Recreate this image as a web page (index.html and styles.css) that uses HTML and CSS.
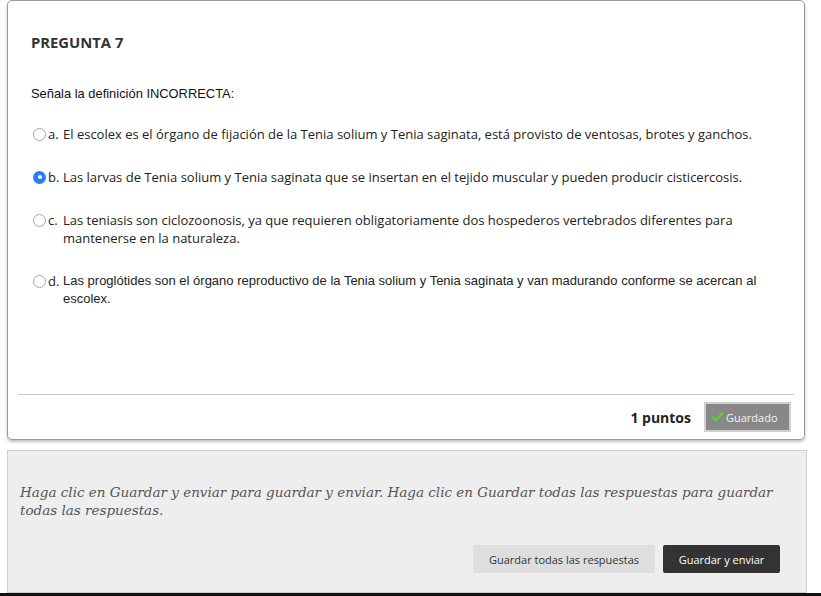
FILE: index.html
```html
<!DOCTYPE html>
<html lang="es">
<head>
<meta charset="utf-8">
<title>Pregunta 7</title>
<link rel="stylesheet" href="styles.css">
</head>
<body>
<div class="page">
  <section class="card">
    <h2 class="q-title">PREGUNTA 7</h2>
    <p class="q-text">Señala la definición INCORRECTA:</p>
    <ul class="options">
      <li class="opt">
        <span class="radio"></span>
        <span class="letter">a.</span>
        <span class="opt-text">El escolex es el órgano de fijación de la Tenia solium y Tenia saginata, está provisto de ventosas, brotes y ganchos.</span>
      </li>
      <li class="opt">
        <span class="radio checked"></span>
        <span class="letter">b.</span>
        <span class="opt-text">Las larvas de Tenia solium y Tenia saginata que se insertan en el tejido muscular y pueden producir cisticercosis.</span>
      </li>
      <li class="opt">
        <span class="radio"></span>
        <span class="letter">c.</span>
        <span class="opt-text">Las teniasis son ciclozoonosis, ya que requieren obligatoriamente dos hospederos vertebrados diferentes para mantenerse en la naturaleza.</span>
      </li>
      <li class="opt">
        <span class="radio"></span>
        <span class="letter">d.</span>
        <span class="opt-text arial">Las proglótides son el órgano reproductivo de la Tenia solium y Tenia saginata y van madurando conforme se acercan al escolex.</span>
      </li>
    </ul>
    <div class="card-foot">
      <span class="points">1 puntos</span>
      <span class="saved">
        <svg class="check" width="11" height="10" viewBox="0 0 11 10"><path d="M1 5.5 L4 8.5 L10 1.5" fill="none" stroke="#5fd12f" stroke-width="2.2" stroke-linecap="round" stroke-linejoin="round"/></svg>
        Guardado
      </span>
    </div>
  </section>
  <section class="submit-panel">
    <p class="hint">Haga clic en Guardar y enviar para guardar y enviar. Haga clic en Guardar todas las respuestas para guardar todas las respuestas.</p>
    <div class="actions">
      <button class="btn btn-light">Guardar todas las respuestas</button>
      <button class="btn btn-dark">Guardar y enviar</button>
    </div>
  </section>
</div>
<div class="bottom-bar"></div>
</body>
</html>
```

FILE: styles.css
```css
* { box-sizing: border-box; }
html, body { margin: 0; padding: 0; background: #fff; }
body { font-family: "Open Sans", sans-serif; color: #262626; }

.page { padding: 0 14px 0 7px; }

.card {
  width: 798px;
  height: 440px;
  border: 1px solid #9a9a9a;
  border-radius: 5px;
  box-shadow: 0 2px 3px rgba(0,0,0,0.25);
  padding: 28px 10px 0 10px;
  display: flex;
  flex-direction: column;
}

.q-title {
  margin: 0 0 0 13px;
  font-size: 14.8px;
  font-weight: 700;
  color: #333;
  line-height: 26px;
}

.q-text {
  margin: 30px 0 0 13px;
  font-family: "Liberation Sans", Arial, sans-serif;
  font-size: 12.9px;
  line-height: 18px;
  color: #111;
}

.options {
  list-style: none;
  margin: 22px 0 0 0;
  padding: 0 0 0 14px;
  display: flex;
  flex-direction: column;
  gap: 25px;
}

.opt {
  display: flex;
  align-items: flex-start;
  font-size: 13px;
  line-height: 18px;
  color: #222;
}

.radio {
  flex: none;
  width: 13px;
  height: 13px;
  border-radius: 50%;
  border: 1px solid #a6a6a6;
  background: #fff;
  margin: 2.5px 2px 0 1px;
  position: relative;
}
.radio.checked {
  border: none;
  background: #2a7df6;
}
.radio.checked::after {
  content: "";
  position: absolute;
  left: 4.5px;
  top: 4.5px;
  width: 4px;
  height: 4px;
  border-radius: 50%;
  background: #fff;
}

.letter {
  flex: none;
  width: 15px;
}

.opt-text { flex: 1; padding-right: 30px; }
.opt-text.arial { font-family: "Liberation Sans", Arial, sans-serif; font-size: 13px; }

.card-foot {
  margin-top: auto;
  border-top: 1px solid #ccc;
  height: 45px;
  display: flex;
  align-items: center;
  justify-content: flex-end;
  gap: 13px;
  padding-right: 3px;
}

.points {
  font-size: 14px;
  font-weight: 700;
  color: #222;
}

.saved {
  display: inline-flex;
  align-items: center;
  gap: 3px;
  width: 87px;
  height: 30px;
  padding-left: 6px;
  background: #888;
  border: 2px solid #d0d0d0;
  color: #f2f2f2;
  font-size: 11px;
}
.check { display: block; }

.submit-panel {
  margin-top: 10px;
  width: 800px;
  height: 143px;
  background: #eeeeee;
  border: 1px solid #cfcfcf;
  padding: 32px 26px 0 12px;
  display: flex;
  flex-direction: column;
}

.hint {
  margin: 0;
  font-family: "DejaVu Serif", Georgia, serif;
  font-style: italic;
  font-size: 13.5px;
  line-height: 18px;
  color: #555;
}

.actions {
  margin-top: auto;
  margin-bottom: 19px;
  display: flex;
  justify-content: flex-end;
  gap: 8px;
}

.btn {
  height: 28px;
  border: none;
  border-radius: 2px;
  font-family: "Open Sans", sans-serif;
  font-size: 11px;
  padding: 0;
  white-space: nowrap;
}
.btn-light { background: #dedede; color: #333; width: 182px; }
.btn-dark { background: #333; color: #fff; width: 117px; }

.bottom-bar {
  height: 3px;
  background: #111;
}
```
